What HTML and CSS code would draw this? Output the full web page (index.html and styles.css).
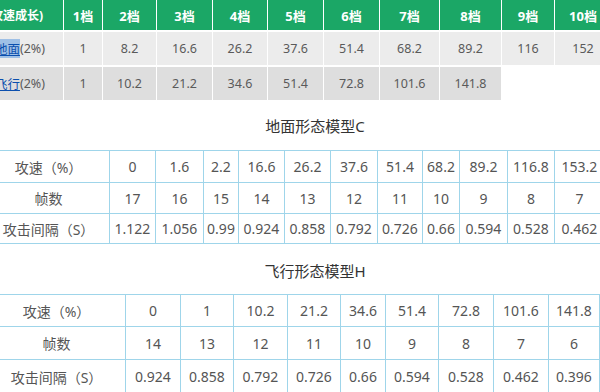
FILE: index.html
```html
<!DOCTYPE html>
<html lang="zh">
<head>
<meta charset="utf-8">
<link rel="stylesheet" href="styles.css">
</head>
<body>
<div class="page">
  <div class="gears">
    <div class="hd first">(攻速成长)</div>
    <div class="hd">1档</div>
    <div class="hd">2档</div>
    <div class="hd">3档</div>
    <div class="hd">4档</div>
    <div class="hd">5档</div>
    <div class="hd">6档</div>
    <div class="hd">7档</div>
    <div class="hd">8档</div>
    <div class="hd">9档</div>
    <div class="hd">10档</div>

    <div class="c r1 first"><a class="lnk sel">地面</a>(2%)</div>
    <div class="c r1">1</div>
    <div class="c r1">8.2</div>
    <div class="c r1">16.6</div>
    <div class="c r1">26.2</div>
    <div class="c r1">37.6</div>
    <div class="c r1">51.4</div>
    <div class="c r1">68.2</div>
    <div class="c r1">89.2</div>
    <div class="c r1">116</div>
    <div class="c r1">152</div>

    <div class="c r2 first"><a class="lnk">飞行</a>(2%)</div>
    <div class="c r2">1</div>
    <div class="c r2">10.2</div>
    <div class="c r2">21.2</div>
    <div class="c r2">34.6</div>
    <div class="c r2">51.4</div>
    <div class="c r2">72.8</div>
    <div class="c r2">101.6</div>
    <div class="c r2">141.8</div>
  </div>

  <div class="title t1">地面形态模型C</div>
  <table class="stats s2">
    <colgroup>
      <col class="w122"><col class="w46"><col class="w48"><col class="w35"><col class="w46"><col class="w46"><col class="w47"><col class="w45"><col class="w37"><col class="w48"><col class="w47"><col class="w50">
    </colgroup>
    <tr class="ra"><td>攻速（%）</td><td>0</td><td>1.6</td><td>2.2</td><td>16.6</td><td>26.2</td><td>37.6</td><td>51.4</td><td>68.2</td><td>89.2</td><td>116.8</td><td>153.2</td></tr>
    <tr class="rb"><td>帧数</td><td>17</td><td>16</td><td>15</td><td>14</td><td>13</td><td>12</td><td>11</td><td>10</td><td>9</td><td>8</td><td>7</td></tr>
    <tr class="rc"><td>攻击间隔（S）</td><td>1.122</td><td>1.056</td><td>0.99</td><td>0.924</td><td>0.858</td><td>0.792</td><td>0.726</td><td>0.66</td><td>0.594</td><td>0.528</td><td>0.462</td></tr>
  </table>

  <div class="title t2">飞行形态模型H</div>
  <table class="stats s3">
    <colgroup>
      <col class="w138"><col class="w55"><col class="w53"><col class="w54"><col class="w53"><col class="w45"><col class="w53"><col class="w55"><col class="w55"><col class="w51">
    </colgroup>
    <tr class="rd"><td>攻速（%）</td><td>0</td><td>1</td><td>10.2</td><td>21.2</td><td>34.6</td><td>51.4</td><td>72.8</td><td>101.6</td><td>141.8</td></tr>
    <tr class="re"><td>帧数</td><td>14</td><td>13</td><td>12</td><td>11</td><td>10</td><td>9</td><td>8</td><td>7</td><td>6</td></tr>
    <tr class="rf"><td>攻击间隔（S）</td><td>0.924</td><td>0.858</td><td>0.792</td><td>0.726</td><td>0.66</td><td>0.594</td><td>0.528</td><td>0.462</td><td>0.396</td></tr>
  </table>
</div>
</body>
</html>
```

FILE: styles.css
```css
html, body {
  margin: 0;
  padding: 0;
  background: #ffffff;
  overflow: hidden;
}

body {
  width: 600px;
  height: 392px;
  font-family: "Noto Sans", "Noto Sans CJK SC", sans-serif;
}

.page {
  width: 600px;
}

/* top gear table */
.gears {
  display: grid;
  grid-template-columns: 103px 38px 53px 55px 54px 55px 55px 59px 61px 52px 56px;
  grid-template-rows: 30px 33px 33px;
  column-gap: 1px;
  row-gap: 2px;
  margin-left: -40px;
  width: 652px;
  font-size: 12.5px;
}

.hd {
  background: #1ba766;
  color: #ffffff;
  font-weight: 700;
  display: flex;
  align-items: center;
  justify-content: center;
  font-size: 13px;
}

.hd.first {
  justify-content: flex-end;
  padding-right: 20px;
  font-size: 12px;
}

.c {
  display: flex;
  align-items: center;
  justify-content: center;
  color: #5a5a5a;
}

.c.first {
  justify-content: flex-end;
  padding-right: 18px;
}

.r1 { background: #ececec; }
.r2 { background: #dedede; }

.lnk {
  color: #0b4fae;
  text-decoration: underline;
}

.sel {
  background: #9fc0e6;
}

/* titles */
.title {
  text-align: center;
  padding-left: 30px;
  font-size: 15px;
  line-height: 22px;
  color: #333333;
}

.t1 {
  margin-top: 15px;
  margin-bottom: 13px;
}

.t2 {
  margin-top: 16px;
  margin-bottom: 12px;
}

/* stat tables */
.stats {
  border-collapse: collapse;
  table-layout: fixed;
  margin-left: -13px;
  font-size: 14px;
  color: #555555;
}

.s2 { width: 617px; }
.s3 { width: 612px; }

.stats td {
  border: 1px solid #9fd5ea;
  text-align: center;
  padding: 0;
  white-space: nowrap;
  overflow: hidden;
}

.ra td { height: 31px; }
.rb td { height: 30px; }
.rc td { height: 29px; }
.rd td { height: 31px; }
.re td { height: 32px; }
.rf td { height: 33px; }

.w122 { width: 122px; }
.w138 { width: 138px; }
.w35 { width: 35px; }
.w37 { width: 37px; }
.w45 { width: 45px; }
.w46 { width: 46px; }
.w47 { width: 47px; }
.w48 { width: 48px; }
.w50 { width: 50px; }
.w51 { width: 51px; }
.w53 { width: 53px; }
.w54 { width: 54px; }
.w55 { width: 55px; }
```
